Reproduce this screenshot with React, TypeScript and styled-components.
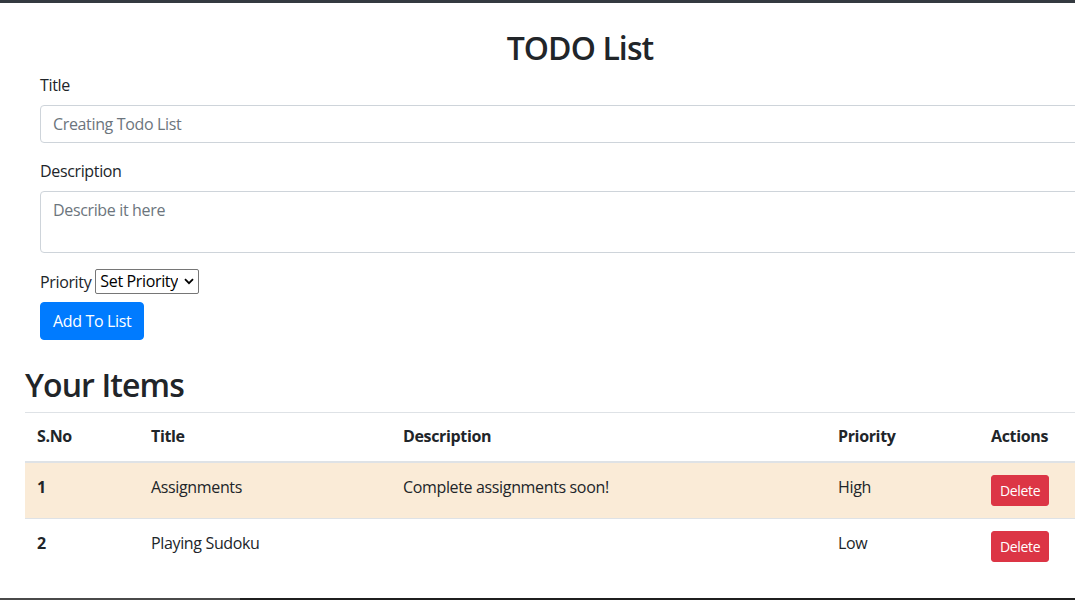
import React from "react";
import styled, { createGlobalStyle } from "styled-components";

const GlobalStyle = createGlobalStyle`
  html, body {
    margin: 0;
    padding: 0;
    background: #fff;
    overflow: hidden;
  }
  body {
    font-family: "Open Sans", "Noto Sans", sans-serif;
    font-size: 16px;
    line-height: 1.5;
    letter-spacing: -0.35px;
    color: #212529;
  }
  * {
    box-sizing: border-box;
  }
`;

const Screen = styled.div`
  min-height: 100vh;
  display: flex;
  flex-direction: column;
`;

const TopStrip = styled.div`
  height: 3px;
  background: #343a40;
`;

const BottomStrip = styled.div`
  margin-top: auto;
  height: 2px;
  background: linear-gradient(to right, #4a4a4a 0 240px, #1f1f1f 240px);
`;

const Container = styled.div`
  width: 1110px;
  margin-left: 25px;
`;

const FormWrap = styled.form`
  padding: 0 15px;
`;

const Heading = styled.h2<{ $center?: boolean }>`
  margin: 0 0 8px;
  font-size: 32px;
  font-weight: 600;
  line-height: 1.2;
  letter-spacing: -0.9px;
  text-align: ${(p) => (p.$center ? "center" : "left")};
`;

const PageTitle = styled(Heading)`
  margin-top: 26px;
  margin-bottom: 6px;
`;

const ItemsTitle = styled(Heading)`
  margin-top: 26px;
  margin-bottom: 7px;
`;

const Group = styled.div`
  margin-bottom: 16px;
`;

const Label = styled.label`
  display: inline-block;
  margin-bottom: 8px;
`;

const fieldBase = `
  display: block;
  width: 100%;
  padding: 6px 12px;
  font: inherit;
  letter-spacing: inherit;
  color: #495057;
  border: 1px solid #ced4da;
  border-radius: 4px;
  &::placeholder {
    color: #6c757d;
  }
`;

const Input = styled.input`
  ${fieldBase}
  height: 38px;
`;

const TextArea = styled.textarea`
  ${fieldBase}
  height: 62px;
  resize: none;
`;

const PriorityRow = styled.div`
  display: flex;
  align-items: center;
  gap: 4px;
  height: 25px;
`;

const SelectWrap = styled.span`
  position: relative;
  display: inline-block;
`;

const Select = styled.select`
  appearance: none;
  height: 25px;
  padding: 0 20px 0 4px;
  font: inherit;
  letter-spacing: inherit;
  line-height: 23px;
  color: #000;
  background: #fff;
  border: 1px solid #767676;
  border-radius: 2px;
`;

const Chevron = styled.svg`
  position: absolute;
  right: 5px;
  top: 9px;
  pointer-events: none;
`;

const Button = styled.button<{ $variant: "primary" | "danger"; $small?: boolean }>`
  display: inline-block;
  font-family: inherit;
  letter-spacing: inherit;
  font-size: ${(p) => (p.$small ? "14px" : "16px")};
  line-height: 1.5;
  padding: ${(p) => (p.$small ? "4px 8px" : "6px 12px")};
  color: #fff;
  background: ${(p) => (p.$variant === "primary" ? "#007bff" : "#dc3545")};
  border: 1px solid ${(p) => (p.$variant === "primary" ? "#007bff" : "#dc3545")};
  border-radius: ${(p) => (p.$small ? "3px" : "4px")};
`;

const AddButton = styled(Button)`
  margin-top: 8px;
`;

const Table = styled.table`
  width: 100%;
  border-collapse: collapse;
  table-layout: fixed;
`;

const Th = styled.th`
  padding: 11px 12px 13px;
  text-align: left;
  font-weight: 700;
  border-top: 1px solid #dee2e6;
  border-bottom: 2px solid #dee2e6;
`;

const Row = styled.tr<{ $highlight?: boolean }>`
  background: ${(p) => (p.$highlight ? "#faebd7" : "#fff")};
`;

const Td = styled.td<{ $bold?: boolean }>`
  padding: 12px;
  vertical-align: top;
  font-weight: ${(p) => (p.$bold ? 700 : 400)};
  border-top: 1px solid #dee2e6;
`;

const items = [
  { title: "Assignments", desc: "Complete assignments soon!", priority: "High", hl: true },
  { title: "Playing Sudoku", desc: "", priority: "Low", hl: false },
];

export default function App() {
  return (
    <Screen>
      <GlobalStyle />
      <TopStrip />
      <Container>
        <PageTitle $center>TODO List</PageTitle>
        <FormWrap>
          <Group>
            <Label>Title</Label>
            <Input placeholder="Creating Todo List" />
          </Group>
          <Group>
            <Label>Description</Label>
            <TextArea placeholder="Describe it here" rows={2} />
          </Group>
          <PriorityRow>
            <span>Priority</span>
            <SelectWrap>
              <Select defaultValue="">
                <option value="">Set Priority</option>
                <option value="High">High</option>
                <option value="Medium">Medium</option>
                <option value="Low">Low</option>
              </Select>
              <Chevron width="10" height="7" viewBox="0 0 10 7">
                <path d="M1 1.2 L5 5.2 L9 1.2" fill="none" stroke="#000" strokeWidth="1.8" />
              </Chevron>
            </SelectWrap>
          </PriorityRow>
          <AddButton type="button" $variant="primary">
            Add To List
          </AddButton>
        </FormWrap>
        <ItemsTitle>Your Items</ItemsTitle>
        <Table>
          <colgroup>
            <col style={{ width: 114 }} />
            <col style={{ width: 252 }} />
            <col style={{ width: 435 }} />
            <col style={{ width: 153 }} />
            <col />
          </colgroup>
          <thead>
            <tr>
              <Th>S.No</Th>
              <Th>Title</Th>
              <Th>Description</Th>
              <Th>Priority</Th>
              <Th>Actions</Th>
            </tr>
          </thead>
          <tbody>
            {items.map((item, i) => (
              <Row key={item.title} $highlight={item.hl}>
                <Td $bold>{i + 1}</Td>
                <Td>{item.title}</Td>
                <Td>{item.desc}</Td>
                <Td>{item.priority}</Td>
                <Td>
                  <Button type="button" $variant="danger" $small>
                    Delete
                  </Button>
                </Td>
              </Row>
            ))}
          </tbody>
        </Table>
      </Container>
      <BottomStrip />
    </Screen>
  );
}
